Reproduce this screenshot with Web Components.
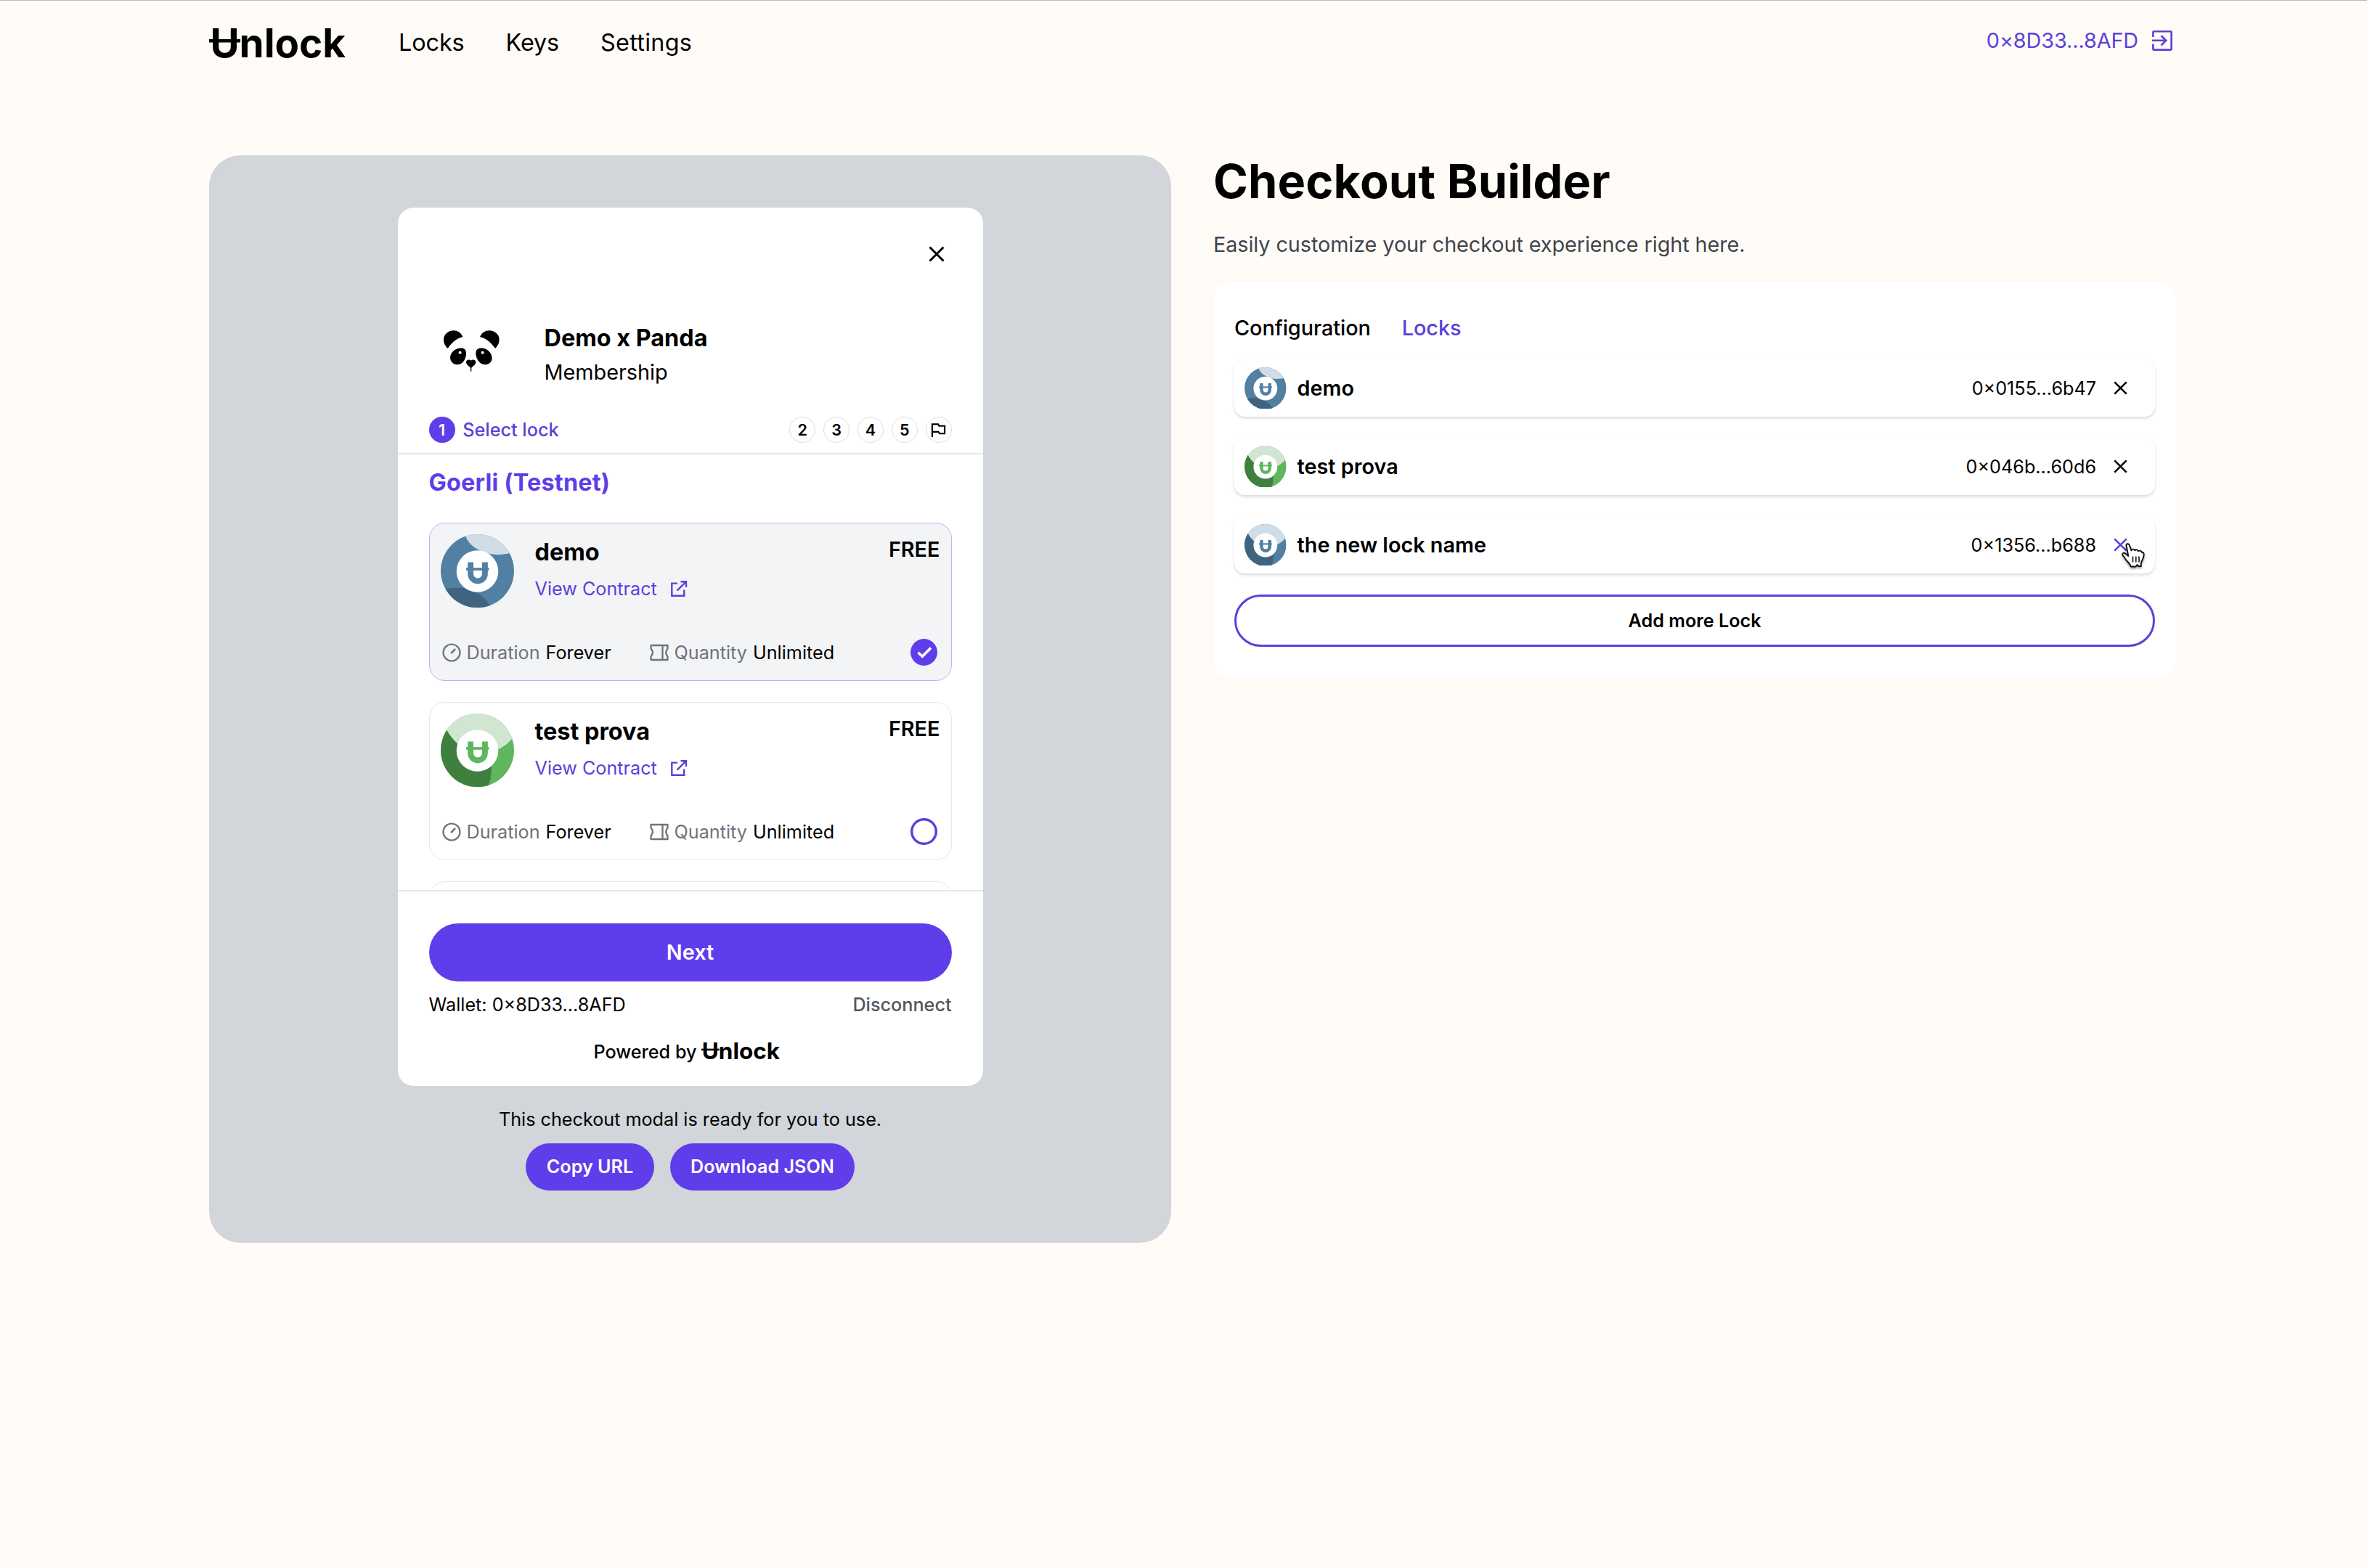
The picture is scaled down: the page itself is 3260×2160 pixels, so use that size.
<!DOCTYPE html>
<html lang="en">
<head>
<meta charset="utf-8">
<title>Unlock – Checkout Builder</title>
<style>
html,body{margin:0;background:#fffcf7}
body{width:3260px;height:2160px;overflow:hidden;font-family:Inter,"Liberation Sans",sans-serif;color:#000;font-size:28.8px}
</style>
</head>
<body>
<unlock-app></unlock-app>
<script>
const define = (name, html, setup) => {
  const tpl = document.createElement('template');
  tpl.innerHTML = html;
  customElements.define(name, class extends HTMLElement {
    constructor() {
      super();
      this.attachShadow({mode: 'open'}).append(tpl.content.cloneNode(true));
    }
    connectedCallback() { if (setup) setup(this, this.shadowRoot); }
  });
};

/* Wordmark: live text with the crossbar over the U */
define('unlock-logo', `
<style>:host{display:block}svg{display:block;width:100%;height:100%;overflow:visible}text{font:700 55px Inter,sans-serif}</style>
<svg viewBox="0 0 188 50"><text x="1.500" y="45" textLength="186.500" lengthAdjust="spacingAndGlyphs">Unlock</text><rect x="0" y="20" width="43" height="4.500"/></svg>`);

const SWIRL_L = 'M0 0H100V30Q93 42 78 49L50 60L24 42Q14 33 8 22Z';
const SWIRL_D = 'M0 0L8 22Q14 33 24 42L50 50L69 70Q70 88 64 101H0Z';
const ART = {
  blue: {base: '#5280a2', light: '#d0dde6', dark: '#40637f',
    l: 'M33 0Q37 14 51 21Q74 33 100 24V0Z', d: 'M0 76Q28 69 48 79Q61 86 69 100H0Z'},
  green: {base: '#5eb65e', light: '#d0e6d1', dark: '#40803f', l: SWIRL_L, d: SWIRL_D},
  slate: {base: '#5280a2', light: '#d0dde6', dark: '#40637f', l: SWIRL_L, d: SWIRL_D}
};
define('lock-avatar', `<style>:host{display:block;flex:none;width:var(--s,57.6px);height:var(--s,57.6px)}svg{display:block;width:100%;height:100%}</style><div></div>`,
  (host, root) => {
    const a = ART[host.getAttribute('art')];
    if (!a) return;
    root.querySelector('div').innerHTML = `<svg viewBox="0 0 100 100"><defs><clipPath id="c"><circle cx="50" cy="50" r="50"/></clipPath></defs>
<g clip-path="url(#c)"><rect width="100" height="100" fill="${a.base}"/><path d="${a.d}" fill="${a.dark}"/><path d="${a.l}" fill="${a.light}"/></g>
<circle cx="50" cy="50.500" r="28.500" fill="#fff"/>
<path d="M40.700 38V54a9.800 9.800 0 0 0 19.600 0V38" fill="none" stroke="${a.base}" stroke-width="7.800"/><rect x="34.700" y="45.700" width="31" height="3.600" fill="${a.base}"/></svg>`;
  });

const ICONS = {
  close: ['0 0 22 22', '<path d="M1.500 1.500L20.500 20.500M20.500 1.500L1.500 20.500" fill="none" stroke="currentColor" stroke-width="3"/>'],
  exit: ['0 0 28 28', '<g fill="none" stroke="currentColor" stroke-width="2.600"><path d="M1.400 9V2.600Q1.400 1.300 2.700 1.300H25.300Q26.600 1.300 26.600 2.600V25.300Q26.600 26.600 25.300 26.600H2.700Q1.400 26.600 1.400 25.300V18.500"/><path d="M0 13.800H19M12.500 7.200L19.200 13.800L12.500 20.500"/></g>'],
  external: ['0 0 24 24', '<g fill="none" stroke="currentColor" stroke-width="2.400"><path d="M10 4.600H2.300V21.800H19.200V13.500"/><path d="M14.500 2.200H22V10M22 2.200L9.500 14.600"/></g>'],
  timer: ['0 0 26 26', '<g fill="none" stroke="currentColor" stroke-width="2.200"><circle cx="13" cy="13" r="11.500"/><path d="M12.200 14.200L18 7.800" stroke-width="2.600"/></g>'],
  ticket: ['0 0 26 26', '<g fill="none" stroke="currentColor" stroke-width="2.300"><path d="M1.500 3H24.500V7.500Q20 13 24.500 18.500V23H1.500V18.500Q6.500 13 1.500 7.500Z" stroke-linejoin="round"/><path d="M17.500 3V23"/></g>'],
  flag: ['0 0 22 22', '<path d="M2 21V2.500H10.500L12 5H20V16H12.500L11 13.500H2" fill="none" stroke="currentColor" stroke-width="2.200"/>'],
  check: ['0 0 37 37', '<circle cx="18.500" cy="18.500" r="18.500" fill="#603deb"/><path d="M10.500 18.800L16.300 24.300L28 12.500" fill="none" stroke="#fff" stroke-width="3.600"/>'],
  ring: ['0 0 37 37', '<circle cx="18.500" cy="18.500" r="16.800" fill="none" stroke="#5a41da" stroke-width="3.500"/>'],
  hand: ['0 0 32 36', '<path d="M6.500 3.500C5.800 1 9.800 .2 10.700 2.900L13.500 10.300C14.300 8 17.800 8.200 18.200 10.400C19.500 8.600 22.400 9.200 22.900 11.300C24.500 10 28 10.800 28.200 13.200C30 12.300 31 14 30.600 17C30.300 22 27.500 24 26.800 28V32L23.500 32L21.500 30L19.500 32.500H13C11.500 28 8 26 6 23C4.500 20 2.500 18.500 1.300 16.300C.6 13.600 3.600 13 5.500 14.700L9.300 18Z" fill="#fff" stroke="#111" stroke-width="1.900" stroke-linejoin="round"/><path d="M15.500 18.500V26.500M19.800 18.500V26.500M24 18.500V26.500" stroke="#111" stroke-width="1.600" fill="none"/>']
};
define('ui-icon', `<style>:host{display:block;flex:none}div{width:100%;height:100%}svg{display:block;width:100%;height:100%;overflow:visible}</style><div></div>`,
  (host, root) => {
    const icon = ICONS[host.getAttribute('name')];
    if (icon) root.querySelector('div').innerHTML = `<svg viewBox="${icon[0]}">${icon[1]}</svg>`;
  });

define('panda-mark', `<style>:host{display:block;width:120px;height:100px}svg{display:block}</style>
<svg width="120" height="100" viewBox="0 0 360 300"><path d="M80 150C58 130 58 100 76 86C98 68 132 74 142 103C115 108 97 127 80 150Z"/><path d="M276 150C298 130 298 100 280 86C258 68 224 74 213 103C240 108 259 127 276 150Z"/><path d="M156 172C156 151 146 147 128 149C107 152 90 168 90 189C91 207 106 217 121 217C143 216 156 192 156 172Z"/><path d="M196 172C196 151 208 147 226 149C246 152 262 170 263 189C263 207 249 217 233 217C210 216 197 192 196 172Z"/><circle cx="131" cy="167" r="6" fill="#fff"/><circle cx="224" cy="167" r="6" fill="#fff"/><path d="M176 200C170 194 157 196 156 206C156 217 168 222 174 230V245H178V230C184 222 196 217 196 206C195 196 182 194 176 200Z"/></svg>`);

define('ui-button', `<style>:host{display:flex;align-items:center;justify-content:center;box-sizing:border-box;border-radius:60px;background:#603deb;color:#fff;font-weight:600;padding-bottom:1px}
:host([outline]){background:#fff;color:#000;border:3px solid #5a41da;padding:0}</style><slot></slot>`);

define('top-bar', `<style>
:host{display:flex;align-items:center;box-sizing:border-box;height:116px;padding:0 268px 0 288px;border-top:1px solid #bdbab6}
unlock-logo{width:188px;height:50px;margin-top:0}
nav{display:flex;gap:57px;margin-left:73px;font-size:32.4px;letter-spacing:-.12px;flex:1}
nav span:last-child{letter-spacing:.25px}
.acct{display:flex;align-items:center;gap:19px;color:#5a41da;padding-bottom:6px;letter-spacing:-.1px}
ui-icon{width:28px;height:28px}
</style><unlock-logo></unlock-logo><nav><span>Locks</span><span>Keys</span><span>Settings</span></nav>
<div class="acct"><span>0×8D33...8AFD</span><ui-icon name="exit"></ui-icon></div>`);

define('lock-option', `<style>
:host{display:block;box-sizing:border-box;height:218px;border:1.8px solid #e5e7eb;border-radius:21.6px;padding:15px 15px 14px;background:#fff;flex:none}
:host([selected]){background:#f3f4f6;border-color:#bdb4ec}
.top{display:flex}
lock-avatar{--s:101px}
.info{margin-left:29px;flex:1}
.name{font-size:32.4px;line-height:50px;font-weight:700}
.link{display:flex;align-items:center;gap:18px;margin-top:7px;height:36px;font-size:25.2px;color:#5a41da}
.link ui-icon{width:24px;height:24px}
.price{line-height:42px;font-weight:600}
.meta{display:flex;align-items:center;height:37px;margin-top:43px;font-size:25.2px;color:#6f727b;padding:0 4px 0 2px}
.meta b{font-weight:400;color:#000;margin-left:1px}
.meta .i{width:26px;height:26px;margin-right:8px}
.meta span{width:252px}
.state{width:37px;height:37px;margin-left:auto}
</style><div class="top"><lock-avatar></lock-avatar><div class="info"><div class="name"><slot></slot></div><div class="link">View Contract<ui-icon name="external"></ui-icon></div></div><div class="price">FREE</div></div>
<div class="meta"><ui-icon class="i" name="timer"></ui-icon><span>Duration <b>Forever</b></span><ui-icon class="i" name="ticket"></ui-icon><span>Quantity <b>Unlimited</b></span><ui-icon class="state"></ui-icon></div>`,
  (host, root) => {
    const fresh = (sel, attr, val) => {
      const old = root.querySelector(sel), el = document.createElement(old.localName);
      el.className = old.className; el.setAttribute(attr, val); old.replaceWith(el);
    };
    fresh('lock-avatar', 'art', host.getAttribute('art'));
    fresh('.state', 'name', host.hasAttribute('selected') ? 'check' : 'ring');
  });

define('checkout-modal', `<style>
:host{display:flex;flex-direction:column;box-sizing:border-box;width:806px;height:1210px;background:#fff;border-radius:21.6px;overflow:hidden}
header{box-sizing:border-box;height:340px;padding:0 43px;border-bottom:2px solid #e5e7eb;flex:none}
.close{display:flex;justify-content:flex-end;box-sizing:border-box;height:144px;padding:53px 10px 0 0}
.close ui-icon{width:22px;height:22px}
.brand{display:flex;height:104px}
.brand div{margin-left:40px;padding-top:11px}
.brand panda-mark{margin-left:-1px}
h2{margin:0;font-size:32.4px;line-height:50px;font-weight:700}
p{margin:0;line-height:44px}
.steps{display:flex;align-items:center;gap:10.800px;margin-top:40px;font-size:21.6px;font-weight:600}
.dot{display:flex;align-items:center;justify-content:center;box-sizing:border-box;width:36px;height:36px;border:1.8px solid #dcdde1;border-radius:50%}
.dot.on{background:#603deb;border:0;color:#fff}
.steps .lbl{flex:1;font-size:25.2px;font-weight:500;color:#5a41da}
.dot ui-icon{width:21px;height:21px}
main{flex:none;height:600px;box-sizing:border-box;padding:14px 43px 0;overflow:hidden;display:flex;flex-direction:column}
h3{margin:0 0 30px;font-size:32.4px;line-height:50px;font-weight:700;letter-spacing:.2px;color:#603deb;flex:none}
.list{display:flex;flex-direction:column;gap:29px}
.peek{box-sizing:border-box;height:218px;flex:none;border:1.8px solid #e5e7eb;border-radius:21.6px}
footer{border-top:2px solid #e5e7eb;padding:44px 43px 0}
ui-button{height:80px}
.w{display:flex;justify-content:space-between;margin-top:14px;font-size:25.2px;line-height:36px}
.w span+span{color:#53565d;font-weight:500}
.p{display:flex;justify-content:center;gap:7px;margin-top:29px;font-size:25.2px;line-height:36px;padding-right:9px;font-weight:500}
.p unlock-logo{width:108px;height:29px;margin-top:2px}
</style>
<header><div class="close"><ui-icon name="close"></ui-icon></div>
<div class="brand"><panda-mark></panda-mark><div><h2>Demo x Panda</h2><p>Membership</p></div></div>
<div class="steps"><div class="dot on">1</div><div class="lbl">Select lock</div><div class="dot">2</div><div class="dot">3</div><div class="dot">4</div><div class="dot">5</div><div class="dot"><ui-icon name="flag"></ui-icon></div></div></header>
<main><h3>Goerli (Testnet)</h3><div class="list"><lock-option art="blue" selected>demo</lock-option><lock-option art="green">test prova</lock-option><div class="peek"></div></div></main>
<footer><ui-button>Next</ui-button><div class="w"><span>Wallet: 0×8D33...8AFD</span><span>Disconnect</span></div><div class="p"><span>Powered by</span><unlock-logo></unlock-logo></div></footer>`);

define('preview-panel', `<style>
:host{display:flex;flex-direction:column;align-items:center;box-sizing:border-box;width:1325px;height:1498px;padding-top:72px;background:#d2d5da;border-radius:43px}
p{margin:28px 0 15px;font-size:25.2px;line-height:36px}
.b{display:flex;gap:22px}
ui-button{height:65px;font-size:25.2px}
</style><checkout-modal></checkout-modal><p>This checkout modal is ready for you to use.</p><div class="b"><ui-button style="width:177px">Copy URL</ui-button><ui-button style="width:254px">Download JSON</ui-button></div>`);

define('lock-row', `<style>
:host{display:flex;align-items:center;box-sizing:border-box;height:79px;padding:0 38px 0 14px;background:#fff;border-radius:14.400px;box-shadow:0 2.200px 4px rgba(0,0,0,.1),0 1.800px 3.600px -1.800px rgba(0,0,0,.1);position:relative}
.n{flex:1;margin-left:15px;font-weight:600}
.a{font-size:25.2px}
.x{width:19px;height:19px;margin-left:24px}
:host([hover]) .x{color:#5a41da}
.h{display:none;position:absolute;right:14px;top:37px;width:32px;height:36px;filter:drop-shadow(0 2px 1.500px rgba(0,0,0,.4))}
:host([hover]) .h{display:block}
</style><slot name="avatar"></slot><span class="n"><slot></slot></span><span class="a"><slot name="address"></slot></span><ui-icon class="x" name="close"></ui-icon><ui-icon class="h" name="hand"></ui-icon>`);

define('builder-panel', `<style>
:host{display:block;width:1326px}
h1{margin:0;font-size:64.8px;line-height:71px;font-weight:700;letter-spacing:.15px}
p{margin:30px 0 29px;line-height:44px;color:#3f444d;letter-spacing:-.08px}
.card{box-sizing:border-box;height:546px;padding:42px 29px 0;background:#fff;border-radius:21.6px;box-shadow:0 0 3px rgba(0,0,0,.03)}
.tabs{display:flex;gap:43px;line-height:44px;font-weight:500;margin-bottom:21px;letter-spacing:-.05px}
.tabs span+span{color:#5a41da}
.rows{display:flex;flex-direction:column;gap:29px}
ui-button{height:72px;font-size:25.2px}
</style><h1>Checkout Builder</h1><p>Easily customize your checkout experience right here.</p>
<div class="card"><div class="tabs"><span>Configuration</span><span>Locks</span></div><div class="rows">
<lock-row><lock-avatar slot="avatar" art="blue"></lock-avatar>demo<span slot="address">0×0155...6b47</span></lock-row>
<lock-row><lock-avatar slot="avatar" art="green"></lock-avatar>test prova<span slot="address">0×046b...60d6</span></lock-row>
<lock-row hover><lock-avatar slot="avatar" art="slate"></lock-avatar>the new lock name<span slot="address">0×1356...b688</span></lock-row>
<ui-button outline>Add more Lock</ui-button></div></div>`);

define('unlock-app', `<style>:host{display:block}.m{display:flex;gap:58px;padding:98px 0 0 288px}</style>
<top-bar></top-bar><div class="m"><preview-panel></preview-panel><builder-panel></builder-panel></div>`);
</script>
</body>
</html>
